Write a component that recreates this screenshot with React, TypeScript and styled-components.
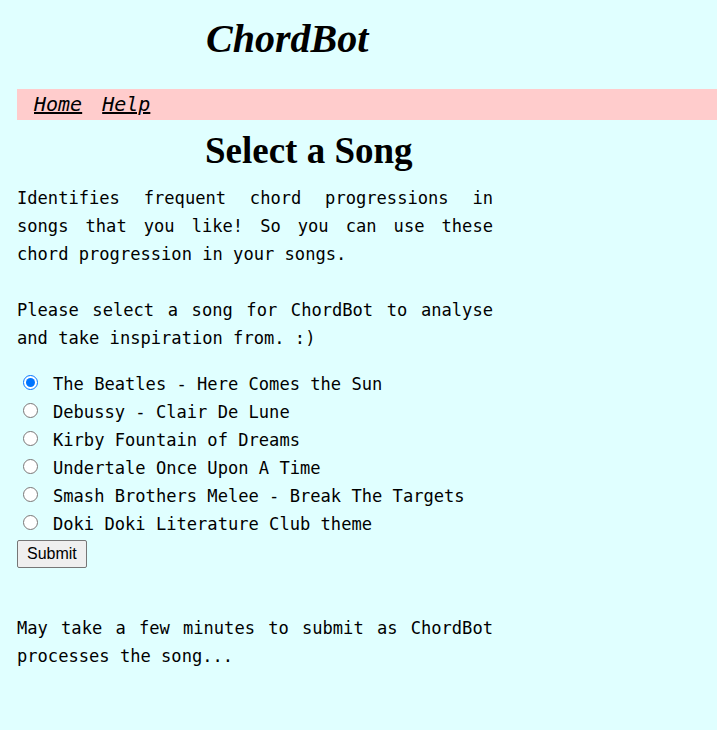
import React from "react";
import styled, { createGlobalStyle } from "styled-components";

const GlobalStyle = createGlobalStyle`
  html, body {
    margin: 0;
    padding: 0;
    background: #e0ffff;
  }
  body {
    min-height: 730px;
  }
`;

const Page = styled.div`
  padding: 0 0 40px 17px;
  color: #000;
  font-family: "DejaVu Sans Mono", "Liberation Mono", monospace;
`;

const Title = styled.h1`
  margin: 16px 0 27px;
  padding-left: 189px;
  font-family: "Liberation Serif", "Times New Roman", serif;
  font-size: 40px;
  font-style: italic;
  font-weight: bold;
  line-height: 46px;
`;

const NavBar = styled.nav`
  display: flex;
  gap: 20px;
  height: 31px;
  align-items: center;
  padding-left: 17px;
  background: #ffcccc;
`;

const NavLink = styled.a`
  font-family: "DejaVu Sans Mono", monospace;
  font-size: 20px;
  font-style: italic;
  line-height: 31px;
  color: #000;
  text-decoration: underline;
`;

const Heading = styled.h2`
  margin: 10px 0 12px;
  padding-left: 188px;
  font-family: "Liberation Serif", "Times New Roman", serif;
  font-size: 37px;
  font-weight: bold;
  line-height: 42px;
`;

const Text = styled.p<{ $gap?: number }>`
  width: 476px;
  margin: 0 0 ${(p) => p.$gap ?? 0}px;
  font-size: 17.1px;
  line-height: 28px;
  text-align: justify;
`;

const Form = styled.form`
  display: flex;
  flex-direction: column;
  align-items: flex-start;
  margin-top: 18px;
`;

const Option = styled.label`
  display: flex;
  align-items: center;
  height: 28px;
  font-size: 17.1px;
  white-space: pre;
`;

const Radio = styled.input`
  width: 15px;
  height: 15px;
  margin: 0 15px 3px 6px;
  accent-color: #0075ff;
`;

const SubmitButton = styled.button`
  margin: 2px 0 46px;
  height: 28px;
  padding: 0 9px;
  font-family: "Liberation Sans", Arial, sans-serif;
  font-size: 16px;
  color: #000;
  background: #efefef;
  border: 1px solid #767676;
  border-radius: 2px;
`;

const songs = [
  "The Beatles - Here Comes the Sun",
  "Debussy - Clair De Lune",
  "Kirby Fountain of Dreams",
  "Undertale Once Upon A Time",
  "Smash Brothers Melee - Break The Targets",
  "Doki Doki Literature Club theme",
];

export default function App() {
  const [selected, setSelected] = React.useState(0);
  return (
    <>
      <GlobalStyle />
      <Page>
        <Title>ChordBot</Title>
        <NavBar>
          <NavLink href="#">Home</NavLink>
          <NavLink href="#">Help</NavLink>
        </NavBar>
        <Heading>Select a Song</Heading>
        <Text $gap={28}>
          Identifies frequent chord progressions in songs that you like! So you
          can use these chord progression in your songs.
        </Text>
        <Text>
          Please select a song for ChordBot to analyse and take inspiration
          from. :)
        </Text>
        <Form onSubmit={(e) => e.preventDefault()}>
          {songs.map((s, i) => (
            <Option key={s}>
              <Radio
                type="radio"
                name="song"
                checked={selected === i}
                onChange={() => setSelected(i)}
              />
              {s}
            </Option>
          ))}
          <SubmitButton type="submit">Submit</SubmitButton>
        </Form>
        <Text>
          May take a few minutes to submit as ChordBot processes the song...
        </Text>
      </Page>
    </>
  );
}
